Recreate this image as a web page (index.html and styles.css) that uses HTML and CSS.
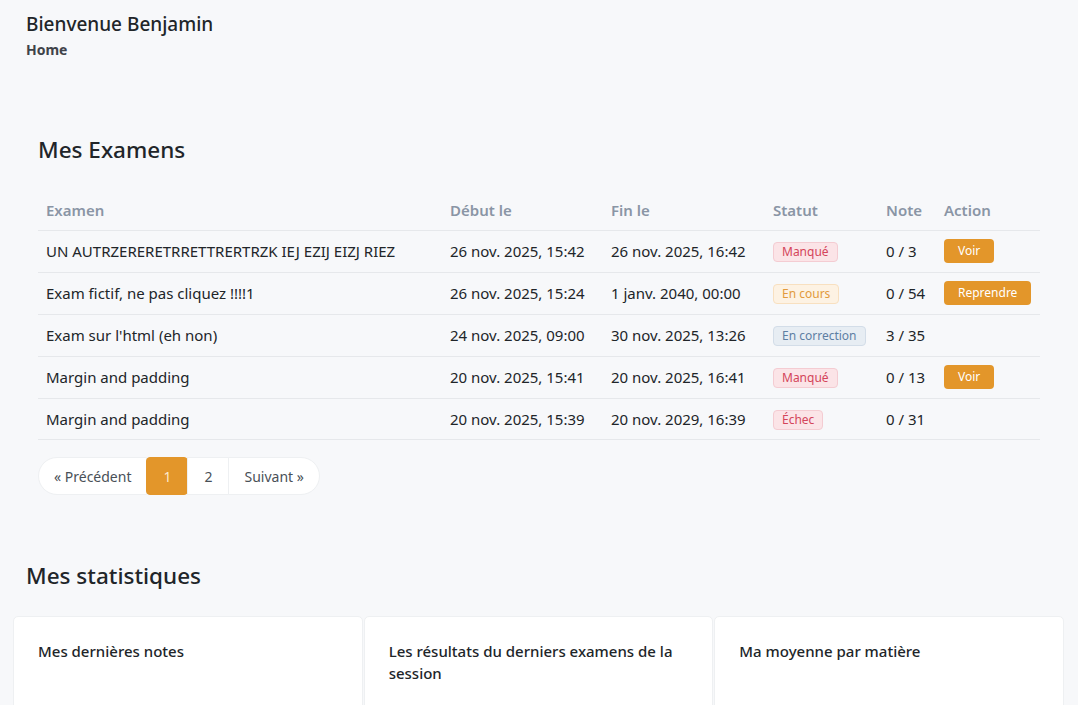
FILE: index.html
```html
<!DOCTYPE html>
<html lang="fr">
<head>
  <meta charset="UTF-8" />
  <meta name="viewport" content="width=device-width, initial-scale=1.0" />
  <title>Accueil - Examens</title>
  <link rel="stylesheet" href="styles.css">
</head>
<body>
  <header class="page-header">
    <h1>Bienvenue Benjamin</h1>
    <div class="breadcrumb">Home</div>
  </header>

  <section class="exams">
    <h2>Mes Examens</h2>

    <table class="exam-table">
      <colgroup>
        <col class="col-name">
        <col class="col-start">
        <col class="col-end">
        <col class="col-status">
        <col class="col-note">
        <col class="col-action">
      </colgroup>
      <thead>
        <tr>
          <th>Examen</th>
          <th>Début le</th>
          <th>Fin le</th>
          <th>Statut</th>
          <th>Note</th>
          <th>Action</th>
        </tr>
      </thead>
      <tbody>
        <tr>
          <td>UN AUTRZERERETRRETTRERTRZK IEJ EZIJ EIZJ RIEZ</td>
          <td>26 nov. 2025, 15:42</td>
          <td>26 nov. 2025, 16:42</td>
          <td><span class="badge badge-missed">Manqué</span></td>
          <td>0 / 3</td>
          <td><button class="btn">Voir</button></td>
        </tr>
        <tr>
          <td>Exam fictif, ne pas cliquez !!!!1</td>
          <td>26 nov. 2025, 15:24</td>
          <td>1 janv. 2040, 00:00</td>
          <td><span class="badge badge-progress">En cours</span></td>
          <td>0 / 54</td>
          <td><button class="btn">Reprendre</button></td>
        </tr>
        <tr>
          <td>Exam sur l'html (eh non)</td>
          <td>24 nov. 2025, 09:00</td>
          <td>30 nov. 2025, 13:26</td>
          <td><span class="badge badge-correction">En correction</span></td>
          <td>3 / 35</td>
          <td></td>
        </tr>
        <tr>
          <td>Margin and padding</td>
          <td>20 nov. 2025, 15:41</td>
          <td>20 nov. 2025, 16:41</td>
          <td><span class="badge badge-missed">Manqué</span></td>
          <td>0 / 13</td>
          <td><button class="btn">Voir</button></td>
        </tr>
        <tr>
          <td>Margin and padding</td>
          <td>20 nov. 2025, 15:39</td>
          <td>20 nov. 2029, 16:39</td>
          <td><span class="badge badge-missed">Échec</span></td>
          <td>0 / 31</td>
          <td></td>
        </tr>
      </tbody>
    </table>

    <nav class="pagination">
      <a class="page-link first">« Précédent</a>
      <a class="page-link active">1</a>
      <a class="page-link">2</a>
      <a class="page-link last">Suivant »</a>
    </nav>
  </section>

  <section class="stats">
    <h2>Mes statistiques</h2>
    <div class="stats-grid">
      <div class="stat-card">
        <h3>Mes dernières notes</h3>
      </div>
      <div class="stat-card">
        <h3>Les résultats du derniers examens de la session</h3>
      </div>
      <div class="stat-card">
        <h3>Ma moyenne par matière</h3>
      </div>
    </div>
  </section>
</body>
</html>
```

FILE: styles.css
```css
body {
  margin: 0;
  font-family: "Noto Sans", Arial, sans-serif;
  background-color: #f7f8fa;
  color: #212529;
}

.page-header {
  padding: 12px 26px;
}

.page-header h1 {
  margin: 0;
  font-size: 19px;
  font-weight: 500;
  line-height: 24px;
}

.breadcrumb {
  margin-top: 4px;
  font-size: 14px;
  font-weight: 700;
  line-height: 20px;
  color: #3f4349;
}

.exams {
  margin-top: 63px;
  padding: 0 38px;
}

.exams h2,
.stats h2 {
  margin: 0;
  font-size: 22.5px;
  font-weight: 500;
  line-height: 30px;
}

.exam-table {
  width: 100%;
  margin-top: 24px;
  border-collapse: collapse;
  font-size: 15px;
}

.col-name { width: 404px; }
.col-start { width: 161px; }
.col-end { width: 162px; }
.col-status { width: 113px; }
.col-note { width: 58px; }

.exam-table th {
  text-align: left;
  font-weight: 600;
  color: #8a95a5;
  padding: 0 8px;
  height: 41px;
  border-bottom: 1px solid #e6e8eb;
}

.exam-table td {
  padding: 0 8px;
  height: 40.9px;
  border-bottom: 1px solid #e6e8eb;
  white-space: nowrap;
}

.badge {
  display: inline-block;
  font-size: 12px;
  line-height: 18px;
  padding: 0 8px;
  border-radius: 4px;
  border: 1px solid transparent;
}

.badge-missed {
  background-color: #fbe4e7;
  border-color: #f4ccd2;
  color: #d4455a;
}

.badge-progress {
  background-color: #fdf2e3;
  border-color: #f8e0c0;
  color: #e29a3c;
}

.badge-correction {
  background-color: #e7edf3;
  border-color: #d3dde8;
  color: #5e7fa3;
}

.btn {
  font-family: inherit;
  font-size: 12px;
  line-height: 16px;
  background-color: #e3962a;
  color: #fff;
  border: none;
  border-radius: 4px;
  padding: 4px 14px;
  cursor: pointer;
}

.pagination {
  display: flex;
  margin-top: 17px;
}

.page-link {
  display: flex;
  align-items: center;
  justify-content: center;
  height: 38px;
  min-width: 42px;
  padding: 0 15px;
  box-sizing: border-box;
  background-color: #fff;
  border: 1px solid #eef0f2;
  margin-left: -1px;
  font-size: 14px;
  color: #495057;
  cursor: pointer;
}

.page-link.first {
  margin-left: 0;
  border-radius: 19px 0 0 19px;
}

.page-link.last {
  border-radius: 0 19px 19px 0;
}

.page-link.active {
  background-color: #e3962a;
  border-color: #e3962a;
  color: #fde9cc;
  border-radius: 4px;
}

.stats {
  margin-top: 66px;
  padding: 0 14px 0 13px;
}

.stats h2 {
  padding-left: 13px;
}

.stats-grid {
  display: grid;
  grid-template-columns: 1fr 1fr 1fr;
  gap: 1px;
  margin-top: 25px;
}

.stat-card {
  background-color: #fff;
  border: 1px solid #eef0f2;
  border-radius: 5px;
  padding: 23px 24px;
  height: 200px;
}

.stat-card h3 {
  margin: 0;
  font-size: 15px;
  font-weight: 500;
  line-height: 22px;
}
```
